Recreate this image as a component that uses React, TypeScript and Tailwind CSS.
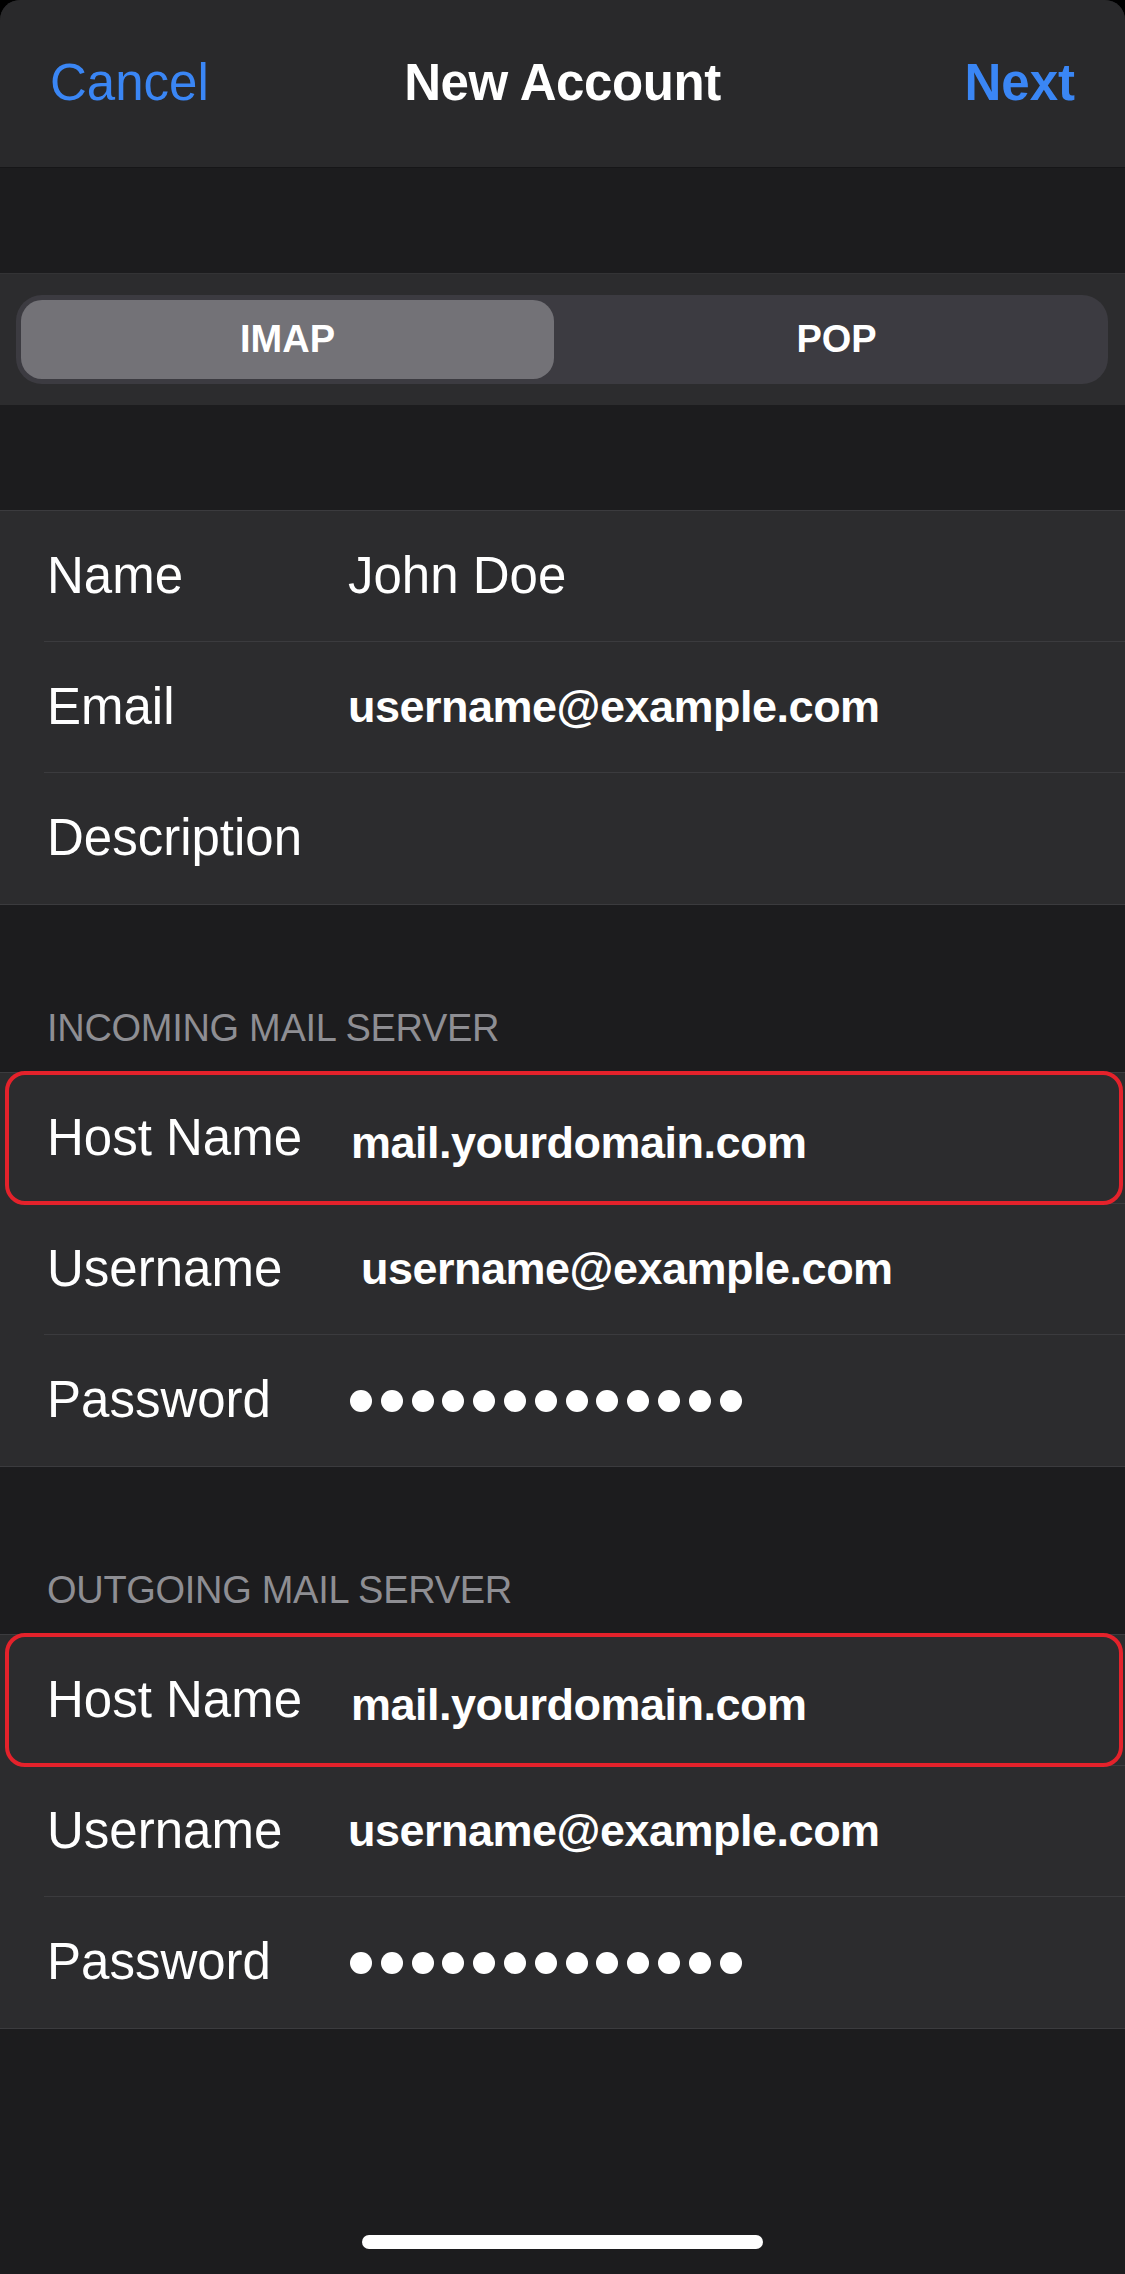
import React from "react";

const FONT = { fontFamily: '"Liberation Sans", Arial, sans-serif' };

function Dots() {
  return (
    <div className="flex items-center gap-[8.8px]">
      {Array.from({ length: 13 }).map((_, i) => (
        <div key={i} className="w-[22px] h-[22px] rounded-full bg-white" />
      ))}
    </div>
  );
}

type RowProps = {
  label: string;
  children?: React.ReactNode;
  last?: boolean;
  highlight?: boolean;
};

function Row({ label, children, last, highlight }: RowProps) {
  return (
    <div className="relative pl-[44px]">
      <div
        className={
          "h-[131px] flex items-center pl-[3px] " +
          (last ? "" : "border-b border-[#3b3b3e]")
        }
      >
        <div className="w-[301px] shrink-0 text-[51px] text-white leading-normal">{label}</div>
        <div className="flex-1 flex items-center">{children}</div>
      </div>
      {highlight && (
        <div className="absolute left-[5px] right-[2px] top-[-2px] bottom-[-1px] border-[4px] border-[#e4222b] rounded-[20px] pointer-events-none" />
      )}
    </div>
  );
}

function Value({ children, extra = "" }: { children: React.ReactNode; extra?: string }) {
  return (
    <span className={"text-[45px] font-bold text-white leading-normal tracking-[-0.5px] " + extra}>
      {children}
    </span>
  );
}

function Group({ children }: { children: React.ReactNode }) {
  return <div className="bg-[#2c2c2e] border-y border-[#3b3b3e]">{children}</div>;
}

function Header({ text }: { text: string }) {
  return (
    <div className="h-[167px] shrink-0 flex items-end pb-[25px] pl-[47px]">
      <span className="text-[38px] leading-[38px] text-[#8e8e93] tracking-[-0.3px]">{text}</span>
    </div>
  );
}

export default function App() {
  return (
    <div className="w-[1125px] h-[2274px] bg-black overflow-hidden" style={FONT}>
      <div className="h-full rounded-t-[20px] overflow-hidden bg-[#1c1c1e] flex flex-col">
        {/* Nav bar */}
        <div className="h-[168px] shrink-0 bg-[#29292b] border-b border-[#161618] grid grid-cols-[1fr_auto_1fr] items-center px-[50px]">
          <span className="text-[51px] text-[#3a86f5] justify-self-start">Cancel</span>
          <span className="text-[51px] font-bold text-white tracking-[-0.4px]">New Account</span>
          <span className="text-[51px] font-bold text-[#3a86f5] justify-self-end">Next</span>
        </div>

        {/* Gap */}
        <div className="h-[105px] shrink-0" />

        {/* Segmented control row */}
        <div className="h-[132px] shrink-0 bg-[#2c2c2e] border-t border-[#333335] flex items-center px-[16px]">
          <div className="w-[1092px] h-[89px] rounded-[26px] bg-[#3c3b41] p-[5px] flex">
            <div className="w-[533px] h-full rounded-[21px] bg-[#737277] flex items-center justify-center">
              <span className="text-[38px] font-bold text-white">IMAP</span>
            </div>
            <div className="flex-1 flex items-center justify-center pl-[16px]">
              <span className="text-[38px] font-bold text-white">POP</span>
            </div>
          </div>
        </div>

        {/* Gap */}
        <div className="h-[105px] shrink-0" />

        {/* Account group */}
        <Group>
          <Row label="Name">
            <span className="text-[51px] text-white leading-normal">John Doe</span>
          </Row>
          <Row label="Email">
            <Value>username@example.com</Value>
          </Row>
          <Row label="Description" last />
        </Group>

        <Header text="INCOMING MAIL SERVER" />

        <Group>
          <Row label="Host Name" highlight>
            <Value extra="ml-[3px] pt-[10px]">mail.yourdomain.com</Value>
          </Row>
          <Row label="Username">
            <Value extra="ml-[13px]">username@example.com</Value>
          </Row>
          <Row label="Password" last>
            <div className="ml-[2px]">
              <Dots />
            </div>
          </Row>
        </Group>

        <Header text="OUTGOING MAIL SERVER" />

        <Group>
          <Row label="Host Name" highlight>
            <Value extra="ml-[3px] pt-[10px]">mail.yourdomain.com</Value>
          </Row>
          <Row label="Username">
            <Value>username@example.com</Value>
          </Row>
          <Row label="Password" last>
            <div className="ml-[2px]">
              <Dots />
            </div>
          </Row>
        </Group>

        {/* Bottom area with home indicator */}
        <div className="flex-1 flex items-end justify-center pb-[25px]">
          <div className="w-[401px] h-[14px] rounded-full bg-white" />
        </div>
      </div>
    </div>
  );
}
